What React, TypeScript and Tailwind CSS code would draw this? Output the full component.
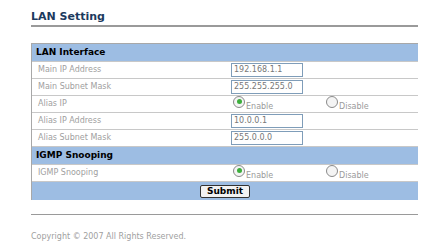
import React from 'react';

const font = { fontFamily: '"DejaVu Sans", Verdana, sans-serif' };

const Radio = ({ on, label }: { on?: boolean; label: string }) => (
  <span className="flex items-start">
    <span className="w-[12px] h-[12px] rounded-full border border-[#8a8a8a] bg-[#f4f4f4] flex items-center justify-center">
      {on && <span className="w-[5px] h-[5px] rounded-full bg-[#3cae3c]" />}
    </span>
    <span className="text-[8px] text-[#9a9a9a] mt-[5px] ml-[1px]">{label}</span>
  </span>
);

const Input = ({ value }: { value: string }) => (
  <div className="w-[72px] h-[14px] border border-[#7f9db9] px-[2px] text-[8px] leading-[12px] text-[#777]">{value}</div>
);

const Row = ({ label, children }: { label: string; children: React.ReactNode }) => (
  <div className="flex h-[17px] border-b border-[#c8c8c8]">
    <div className="w-[199px] pl-[6px] flex items-center text-[8px] text-[#a0a0a0]">{label}</div>
    <div className="flex-1 flex items-center">{children}</div>
  </div>
);

const Header = ({ title }: { title: string }) => (
  <div className="h-[18px] bg-[#9dbde3] border-b border-[#c8c8c8] flex items-center pl-[4px] pt-[1px] text-[9px] font-bold text-black">{title}</div>
);

const Radios = () => (
  <div className="flex">
    <div className="w-[95px] pl-[2px]"><Radio on label="Enable" /></div>
    <Radio label="Disable" />
  </div>
);

export default function App() {
  return (
    <div className="w-[445px] h-[251px] bg-white pl-[31px] pr-[27px] pt-[10px]" style={font}>
      <h1 className="text-[11px] font-bold text-[#1c3a5e] leading-[13px]">LAN Setting</h1>
      <div className="mt-[2px] h-[2px] bg-[#9a9a9a]" />
      <div className="mt-[16px] border-t border-l border-[#a8a8a8]">
        <Header title="LAN Interface" />
        <Row label="Main IP Address"><Input value="192.168.1.1" /></Row>
        <Row label="Main Subnet Mask"><Input value="255.255.255.0" /></Row>
        <Row label="Alias IP"><Radios /></Row>
        <Row label="Alias IP Address"><Input value="10.0.0.1" /></Row>
        <Row label="Alias Subnet Mask"><Input value="255.0.0.0" /></Row>
        <Header title="IGMP Snooping" />
        <Row label="IGMP Snooping"><Radios /></Row>
        <div className="h-[18px] bg-[#9dbde3] flex items-center justify-center">
          <button className="h-[13px] px-[6px] border border-[#333] rounded-[2px] bg-[#f2f2f2] text-[9px] font-bold text-black leading-none">Submit</button>
        </div>
      </div>
      <div className="mt-[14px] h-px bg-[#9a9a9a]" />
      <p className="mt-[16px] text-[8px] text-[#a0a0a0]">Copyright © 2007 All Rights Reserved.</p>
    </div>
  );
}
